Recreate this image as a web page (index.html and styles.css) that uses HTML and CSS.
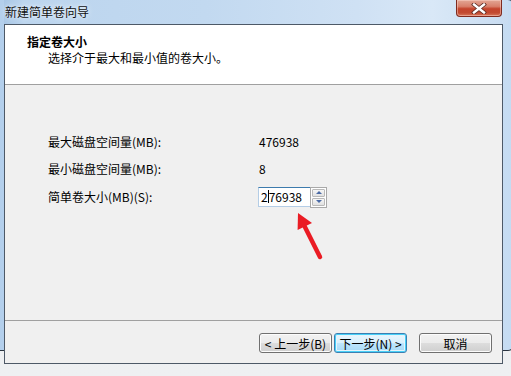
FILE: index.html
```html
<!DOCTYPE html>
<html lang="zh-CN">
<head>
<meta charset="utf-8">
<title>新建简单卷向导</title>
<link rel="stylesheet" href="styles.css">
</head>
<body>
<div class="window">
  <div class="titlebar">
    <span class="title">新建简单卷向导</span>
    <div class="close">
      <svg width="18" height="11" viewBox="0 0 18 11">
        <path d="M4 1.5 L14 9.5 M14 1.5 L4 9.5" stroke="#5a2a22" stroke-width="4" stroke-linecap="square" fill="none"/>
        <path d="M4 1.5 L14 9.5 M14 1.5 L4 9.5" stroke="#ffffff" stroke-width="2.4" stroke-linecap="square" fill="none"/>
      </svg>
    </div>
  </div>
  <div class="client">
    <div class="header">
      <div class="h-title">指定卷大小</div>
      <div class="h-sub">选择介于最大和最小值的卷大小。</div>
    </div>
    <div class="content">
      <div class="form">
        <span class="label">最大磁盘空间量(MB):</span>
        <span class="value">476938</span>
        <span class="label">最小磁盘空间量(MB):</span>
        <span class="value">8</span>
        <span class="label">简单卷大小(MB)(S):</span>
        <div class="spin">
          <div class="input">2<span class="caret"></span>76938</div>
          <div class="spinbtns">
            <div class="sbtn"><span class="tri up"></span></div>
            <div class="sbtn"><span class="tri down"></span></div>
          </div>
        </div>
      </div>
      <svg class="arrow" width="40" height="55" viewBox="0 0 40 55">
        <path d="M14.7 17.4 L30 48" stroke="#ea1c24" stroke-width="4.5" stroke-linecap="round" fill="none"/>
        <polygon points="8,4 7.6,21 22,14" fill="#ea1c24"/>
      </svg>
    </div>
    <div class="footer">
      <button class="btn">&lt; 上一步(B)</button>
      <button class="btn default">下一步(N) &gt;</button>
      <button class="btn cancel">取消</button>
    </div>
  </div>
</div>
</body>
</html>
```

FILE: styles.css
```css
html, body {
  margin: 0;
  padding: 0;
}
body {
  width: 511px;
  height: 376px;
  background: linear-gradient(#5b6d86 0, #34415a 60px, #e9ecef 62px, #eef0f2 100%);
  font-family: "Noto Sans CJK SC", "Noto Sans", sans-serif;
  font-size: 12px;
  color: #000;
  overflow: hidden;
}
.window {
  position: relative;
  width: 504px;
  height: 345px;
  padding: 0 5px 5px 4px;
  border-right: 1px solid #2a3440;
  border-bottom: 1px solid #2a3440;
  border-radius: 0 6px 6px 0;
  background: linear-gradient(90deg, #b3cfec 0, #c4daf1 30%, #c9def3 60%, #d6e6f6 85%, #c4dbf2 100%);
}
.titlebar {
  height: 24px;
  display: flex;
  align-items: center;
  background: linear-gradient(90deg, #a9c7e6 0, #bcd5ee 4%, #c2d9f0 40%, #cfe1f4 70%, #d9e8f7 85%, #c8dcf1 100%);
}
.title {
  padding-left: 1px;
  line-height: 24px;
  color: #111;
  text-shadow: 0 0 6px #e8f1fb, 0 0 3px #e8f1fb;
}
.close {
  position: absolute;
  top: 0;
  left: 456px;
  width: 44px;
  height: 16px;
  border: 1px solid #7f2b1f;
  border-top: none;
  border-radius: 0 0 4px 4px;
  background: linear-gradient(#e3a795 0, #d8806b 40%, #c4442c 55%, #c24a31 80%, #d9775a 100%);
  box-shadow: inset 0 0 0 1px rgba(255, 220, 210, 0.45);
  display: flex;
  align-items: center;
  justify-content: center;
}
.client {
  width: 497px;
  height: 338px;
  border: 1px solid #4d5967;
  background: #f0f0f0;
  display: flex;
  flex-direction: column;
}
.header {
  height: 50px;
  padding-top: 9px;
  background: #fff;
  border-bottom: 1px solid #a0a0a0;
  line-height: 15px;
}
.h-title {
  padding-left: 22px;
  font-weight: bold;
}
.h-sub {
  margin-top: 1px;
  padding-left: 43px;
}
.content {
  position: relative;
  height: 188px;
  padding-top: 47px;
}
.form {
  display: grid;
  grid-template-columns: 210px auto;
  grid-template-rows: 20px 20px 22px;
  row-gap: 7px;
  padding-left: 43px;
  align-items: center;
  line-height: 20px;
}
.value {
  padding-left: 1px;
}
.spin {
  display: flex;
  width: 71px;
  height: 21px;
}
.input {
  width: 49px;
  height: 18px;
  padding-left: 2px;
  border: 1px solid #b4cde6;
  border-top-color: #3d7bad;
  border-right: none;
  background: #fff;
  line-height: 18px;
  display: flex;
  align-items: center;
}
.caret {
  display: inline-block;
  width: 1px;
  height: 13px;
  background: #000;
}
.spinbtns {
  display: flex;
  flex-direction: column;
  width: 17px;
  height: 21px;
  background: #fff;
  border: 1px solid #a9a9a9;
  box-sizing: border-box;
  gap: 1px;
  padding: 1px;
}
.sbtn {
  flex: 1;
  border: 1px solid #b9b9b9;
  border-radius: 1px;
  background: linear-gradient(#f6f6f6, #e1e1e1);
  display: flex;
  align-items: center;
  justify-content: center;
}
.tri {
  width: 0;
  height: 0;
  border-left: 3px solid transparent;
  border-right: 3px solid transparent;
}
.tri.up {
  border-bottom: 3px solid #4a6aa5;
}
.tri.down {
  border-top: 3px solid #4a6aa5;
}
.arrow {
  position: absolute;
  left: 285px;
  top: 124px;
}
.footer {
  flex: 1;
  border-top: 1px solid #a0a0a0;
  display: flex;
  justify-content: flex-end;
  align-items: flex-start;
  padding: 12px 10px 0 0;
}
.btn {
  width: 73px;
  height: 20px;
  padding: 0;
  border: 1px solid #707070;
  border-radius: 3px;
  background: linear-gradient(#f2f2f2 0, #ebebeb 50%, #dddddd 51%, #cfcfcf 100%);
  box-shadow: inset 0 0 0 1px #fcfcfc;
  font-family: "Noto Sans CJK SC", "Noto Sans", sans-serif;
  font-size: 12px;
  line-height: 17px;
  color: #000;
}
.btn.default {
  margin-left: 2px;
  border-color: #3c7fb1;
  box-shadow: inset 0 0 0 1px #48d0f8, inset 0 0 0 2px #e5f4fc;
  background: linear-gradient(#eaf6fd 0, #d9f0fc 50%, #bee6fd 51%, #a7d9f5 100%);
}
.btn.cancel {
  margin-left: 12px;
}
```
